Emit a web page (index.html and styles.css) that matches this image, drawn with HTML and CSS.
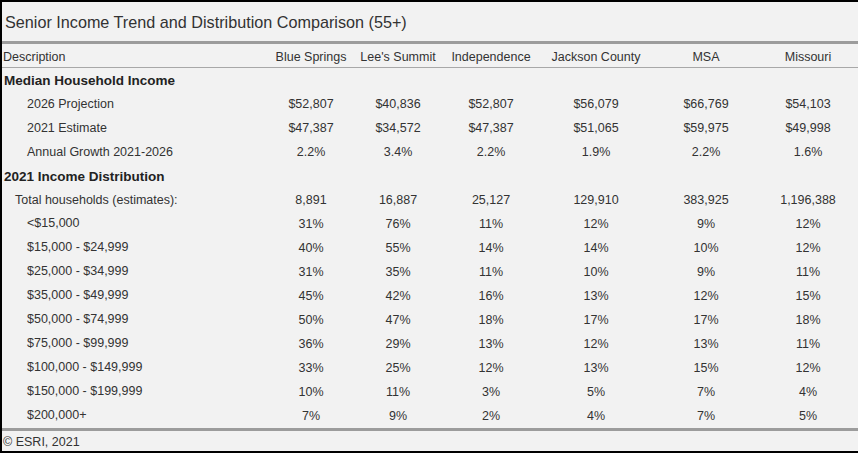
FILE: index.html
```html
<!DOCTYPE html>
<html>
<head>
<meta charset="utf-8">
<link rel="stylesheet" href="styles.css">
</head>
<body>
<div class="panel">
  <div class="title">Senior Income Trend and Distribution Comparison (55+)</div>
  <div class="rule thick"></div>
  <div class="row head">
    <div class="lbl">Description</div>
    <div>Blue Springs</div><div>Lee's Summit</div><div>Independence</div><div>Jackson County</div><div>MSA</div><div>Missouri</div>
  </div>
  <div class="rule thin"></div>
  <div class="body">
    <div class="row sec"><div class="lbl">Median Household Income</div></div>
    <div class="row"><div class="lbl i2">2026 Projection</div><div>$52,807</div><div>$40,836</div><div>$52,807</div><div>$56,079</div><div>$66,769</div><div>$54,103</div></div>
    <div class="row"><div class="lbl i2">2021 Estimate</div><div>$47,387</div><div>$34,572</div><div>$47,387</div><div>$51,065</div><div>$59,975</div><div>$49,998</div></div>
    <div class="row"><div class="lbl i2">Annual Growth 2021-2026</div><div>2.2%</div><div>3.4%</div><div>2.2%</div><div>1.9%</div><div>2.2%</div><div>1.6%</div></div>
    <div class="row sec"><div class="lbl">2021 Income Distribution</div></div>
    <div class="row"><div class="lbl i1">Total households (estimates):</div><div>8,891</div><div>16,887</div><div>25,127</div><div>129,910</div><div>383,925</div><div>1,196,388</div></div>
    <div class="row"><div class="lbl i2 up">&lt;$15,000</div><div>31%</div><div>76%</div><div>11%</div><div>12%</div><div>9%</div><div>12%</div></div>
    <div class="row"><div class="lbl i2 up">$15,000 - $24,999</div><div>40%</div><div>55%</div><div>14%</div><div>14%</div><div>10%</div><div>12%</div></div>
    <div class="row"><div class="lbl i2 up">$25,000 - $34,999</div><div>31%</div><div>35%</div><div>11%</div><div>10%</div><div>9%</div><div>11%</div></div>
    <div class="row"><div class="lbl i2 up">$35,000 - $49,999</div><div>45%</div><div>42%</div><div>16%</div><div>13%</div><div>12%</div><div>15%</div></div>
    <div class="row"><div class="lbl i2 up">$50,000 - $74,999</div><div>50%</div><div>47%</div><div>18%</div><div>17%</div><div>17%</div><div>18%</div></div>
    <div class="row"><div class="lbl i2 up">$75,000 - $99,999</div><div>36%</div><div>29%</div><div>13%</div><div>12%</div><div>13%</div><div>11%</div></div>
    <div class="row"><div class="lbl i2 up">$100,000 - $149,999</div><div>33%</div><div>25%</div><div>12%</div><div>13%</div><div>15%</div><div>12%</div></div>
    <div class="row"><div class="lbl i2 up">$150,000 - $199,999</div><div>10%</div><div>11%</div><div>3%</div><div>5%</div><div>7%</div><div>4%</div></div>
    <div class="row"><div class="lbl i2 up">$200,000+</div><div>7%</div><div>9%</div><div>2%</div><div>4%</div><div>7%</div><div>5%</div></div>
  </div>
  <div class="rule thick"></div>
  <div class="foot">© ESRI, 2021</div>
</div>
</body>
</html>
```
FILE: styles.css
```css
html, body {
  margin: 0;
  padding: 0;
  background: #ffffff;
}
body {
  font-family: "Liberation Sans", Arial, sans-serif;
  font-size: 12.5px;
  color: #333333;
}
.panel {
  box-sizing: border-box;
  width: 858px;
  height: 453px;
  background: #f2f2f2;
  border-top: 2px solid #000;
  border-left: 2px solid #000;
  border-bottom: 2px solid #000;
  display: flex;
  flex-direction: column;
}
.title {
  height: 39px;
  box-sizing: border-box;
  padding: 10px 0 0 3px;
  font-size: 16.2px;
  line-height: 20px;
  color: #333;
}
.rule.thick {
  height: 3px;
  background: #9c9c9c;
}
.rule.thin {
  height: 1px;
  background: #a8a8a8;
}
.row {
  display: grid;
  grid-template-columns: 266px 86px 88px 98px 112px 108px 96px;
  align-items: center;
  height: 24px;
}
.row > div {
  text-align: center;
  white-space: nowrap;
}
.row > .lbl {
  text-align: left;
  padding-left: 1px;
}
.head {
  height: 23px;
  padding-top: 2px;
  box-sizing: border-box;
}
.sec .lbl {
  font-weight: bold;
  font-size: 13.5px;
  color: #222;
  padding-left: 2px;
}
.lbl.i1 { padding-left: 13px; }
.lbl.i2 { padding-left: 25px; }
.lbl.up { padding-bottom: 3px; }
.foot {
  height: 20px;
  box-sizing: border-box;
  padding: 3px 0 0 1px;
  line-height: 16px;
}
```
